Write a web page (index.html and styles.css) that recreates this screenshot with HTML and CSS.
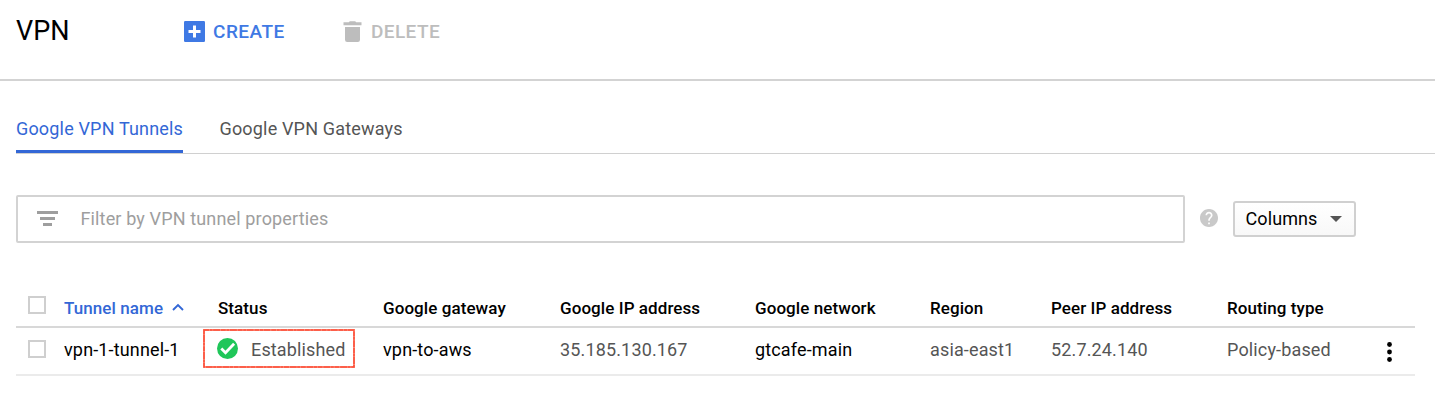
FILE: index.html
```html
<!DOCTYPE html>
<html lang="en">
<head>
<meta charset="utf-8">
<title>VPN</title>
<link rel="stylesheet" href="styles.css">
</head>
<body>
<header class="topbar">
  <h1 class="title">VPN</h1>
  <button class="action create">
    <svg class="action-icon" width="21" height="21" viewBox="0 0 21 21"><rect width="21" height="21" rx="1.2" fill="#3f79e4"/><path d="M9 4.500h3V9h4.500v3H12v4.500H9V12H4.500V9H9z" fill="#fff"/></svg>
    <span>CREATE</span>
  </button>
  <button class="action delete">
    <svg class="action-icon" width="19" height="21" viewBox="0 0 19 21"><path d="M.5 1.200h5.300L6.800.2h5.400l1 1h5.300v3H.5zM2 6h15v12.800a2.200 2.200 0 0 1-2.200 2.200H4.200A2.200 2.200 0 0 1 2 18.800z" fill="#bdbdbd"/></svg>
    <span>DELETE</span>
  </button>
</header>
<nav class="tabs">
  <a class="tab active"><span>Google VPN Tunnels</span></a>
  <a class="tab"><span>Google VPN Gateways</span></a>
</nav>
<section class="toolbar">
  <div class="filter">
    <svg width="21" height="15" viewBox="0 0 21 15"><path d="M0 0h21v3H0zM3 6h15v3H3zM6 12h9v3H6z" fill="#9e9e9e"/></svg>
    <span class="placeholder">Filter by VPN tunnel properties</span>
  </div>
  <svg class="help" width="18" height="18" viewBox="2 2 20 20"><path d="M12 2C6.480 2 2 6.480 2 12s4.480 10 10 10 10-4.480 10-10S17.520 2 12 2zm1 17h-2v-2h2v2zm2.070-7.750-.9.920C13.450 12.900 13 13.500 13 15h-2v-.5c0-1.100.450-2.100 1.170-2.830l1.240-1.260c.370-.360.590-.860.590-1.410 0-1.100-.9-2-2-2s-2 .9-2 2H8c0-2.210 1.790-4 4-4s4 1.790 4 4c0 .880-.360 1.680-.930 2.250z" fill="#c9c9c9" stroke="#c9c9c9" stroke-width=".1"/></svg>
  <button class="columns"><span>Columns</span><svg width="12" height="6" viewBox="0 0 12 6"><path d="M0 0h12L6 6z" fill="#555"/></svg></button>
</section>
<main class="table">
  <div class="row head">
    <i class="checkbox"></i>
    <span class="sorted"><span>Tunnel name</span><svg width="12" height="8" viewBox="0 0 12 8"><path d="M1 7l5-5 5 5" fill="none" stroke="#3367d6" stroke-width="1.900"/></svg></span>
    <span>Status</span>
    <span>Google gateway</span>
    <span>Google IP address</span>
    <span>Google network</span>
    <span>Region</span>
    <span>Peer IP address</span>
    <span>Routing type</span>
  </div>
  <div class="row body">
    <i class="checkbox"></i>
    <span class="link">vpn-1-tunnel-1</span>
    <span class="status">
      <svg width="21" height="21" viewBox="0 0 21 21"><circle cx="10.500" cy="10.500" r="10.500" fill="#1fc659"/><path d="M4.300 10.600l4.200 4.200 8.600-9" fill="none" stroke="#fff" stroke-width="2.800"/></svg>
      <span>Established</span>
    </span>
    <span class="link">vpn-to-aws</span>
    <span>35.185.130.167</span>
    <span class="link">gtcafe-main</span>
    <span>asia-east1</span>
    <span>52.7.24.140</span>
    <span>Policy-based</span>
    <svg class="more" width="5" height="20" viewBox="0 0 5 20"><g fill="#000"><circle cx="2.500" cy="2.500" r="2.400"/><circle cx="2.500" cy="10" r="2.400"/><circle cx="2.500" cy="17.500" r="2.400"/></g></svg>
  </div>
  <svg class="highlight" width="153" height="40" viewBox="0 0 153 40">
    <rect x="1" y="2" width="150" height="37" fill="none" stroke="#ff8c7a" stroke-width="1.800"/>
    <rect x="1" y="2" width="150" height="37" fill="none" stroke="#fb4d37" stroke-width="1.500" stroke-dasharray="5 .6 3 .5 7 .7"/>
  </svg>
</main>
</body>
</html>
```
FILE: styles.css
```css
* { box-sizing: border-box; }
body {
  margin: 0;
  height: 402px;
  overflow: hidden;
  background: #fff;
  font-family: Roboto, "Liberation Sans", sans-serif;
  font-size: 18px;
  color: #000;
}
svg { display: block; flex: none; }
button { font: inherit; background: none; border: 0; padding: 0; }
span { white-space: nowrap; }

.topbar {
  display: flex;
  height: 81px;
  padding: 0 16px;
  border-bottom: 2px solid #d3d3d3;
}
.title {
  margin: 0;
  width: 168px;
  font-size: 27px;
  font-weight: 400;
  line-height: 63px;
}
.action { display: flex; align-items: center; height: 63px; font-weight: 500; font-size: 19px; gap: 8px; }
.action span { margin-top: -1px; }
.create { width: 159px; color: #3f79e4; letter-spacing: .5px; }
.delete { color: #bdbdbd; gap: 9px; letter-spacing: .4px; }

.tabs {
  display: flex;
  gap: 36.500px;
  height: 73px;
  margin-left: 16px;
  border-bottom: 1px solid #d0d0d0;
  letter-spacing: .17px;
}
.tab { height: 72px; padding-top: 37px; line-height: 22px; color: #555; }
.tab.active { width: 167px; color: #3367d6; border-bottom: 3px solid #3367d6; }

.toolbar { display: flex; align-items: center; margin: 41px 0 0 16px; height: 48px; }
.filter {
  display: flex;
  align-items: center;
  width: 1169px;
  height: 48px;
  padding: 0 19px;
  border: 2px solid #d3d3d3;
  border-radius: 2px;
  gap: 22.500px;
  color: #9e9e9e;
  letter-spacing: .14px;
}
.filter svg { margin-top: -2px; }
.placeholder { margin-top: -2px; }
.help { margin: -2px 15px 0 15px; }
.columns {
  display: flex;
  align-items: center;
  justify-content: space-between;
  width: 123px;
  height: 36px;
  padding: 0 12px 0 10.500px;
  border: 2px solid #d0d0d0;
  border-radius: 3px;
  background: linear-gradient(#fff, #f8f8f8);
  letter-spacing: .1px;
}
.columns span { margin-top: -2px; }

.table { position: relative; width: 1399px; margin: 43px 0 0 16px; }
.row {
  display: grid;
  grid-template-columns: 36px 154px 165px 177px 195px 175px 121px 176px 145px 15px;
  padding-left: 12px;
  align-items: center;
}
.head { height: 42px; padding-top: 4px; font-weight: 500; font-size: 17px; letter-spacing: .08px; border-bottom: 2px solid #d8d8d8; }
.body { height: 48px; padding-bottom: 4px; color: #555; letter-spacing: .15px; border-bottom: 2px solid #ebebeb; }
.checkbox { width: 18px; height: 18px; border: 2px solid #cfcfcf; }
.head .checkbox { margin-top: -7px; }
.sorted { display: flex; align-items: center; gap: 9px; color: #3367d6; }
.sorted svg { margin-top: -2px; }
.link { color: #000; }
.status { display: flex; align-items: center; gap: 13px; }
.status svg { margin: -2px 0 0 -1px; }
.more { margin: 5px 0 0 15px; }
.highlight { position: absolute; left: 187px; top: 42px; }
```
